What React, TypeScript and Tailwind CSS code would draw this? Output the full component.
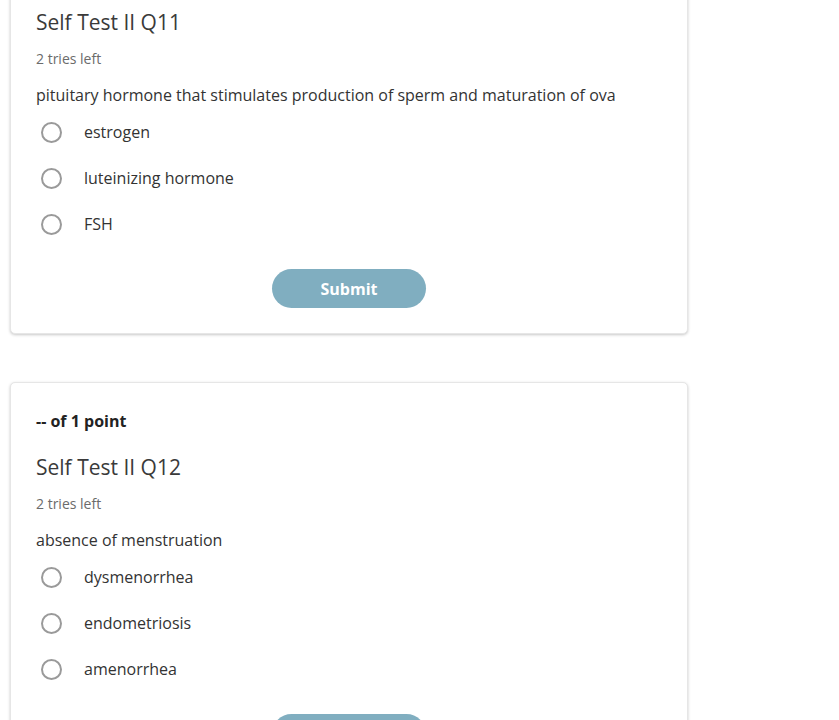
import React from 'react';

type Question = {
  title: string;
  prompt: string;
  options: string[];
};

const questions: Question[] = [
  {
    title: 'Self Test II Q11',
    prompt: 'pituitary hormone that stimulates production of sperm and maturation of ova',
    options: ['estrogen', 'luteinizing hormone', 'FSH'],
  },
  {
    title: 'Self Test II Q12',
    prompt: 'absence of menstruation',
    options: ['dysmenorrhea', 'endometriosis', 'amenorrhea'],
  },
];

function QuestionCard({ q }: { q: Question }) {
  return (
    <div className="w-[678px] rounded-[5px] border border-[#e6e6e6] bg-white px-[25px] pt-[27px] pb-[25px] shadow-[0_1px_3px_rgba(0,0,0,0.22)]">
      <div className="text-[16px] font-bold leading-[22px] text-[#222]">-- of 1 point</div>
      <h2 className="mt-[21px] text-[21px] leading-[28px] text-[#3a3a3a]">{q.title}</h2>
      <div className="mt-[14px] text-[14px] leading-[18px] text-[#6b6b6b]">2 tries left</div>
      <p className="mt-[16px] text-[16px] leading-[22px] text-[#333]">{q.prompt}</p>
      <div className="mt-[3px] flex flex-col">
        {q.options.map((opt) => (
          <label key={opt} className="flex h-[46px] items-center">
            <span className="ml-[5px] h-[21px] w-[21px] rounded-full border-2 border-[#9a9a9a] bg-white" />
            <span className="ml-[22px] text-[16px] leading-[22px] text-[#333]">{opt}</span>
          </label>
        ))}
      </div>
      <div className="mt-[22px] flex justify-center">
        <button
          type="button"
          className="h-[39px] w-[154px] rounded-full bg-[#80aec0] text-[16px] font-bold text-white"
        >
          Submit
        </button>
      </div>
    </div>
  );
}

export default function App() {
  return (
    <div className="min-h-screen overflow-hidden bg-white font-['Open_Sans',sans-serif]">
      <div className="-mt-[63px] ml-[10px] flex flex-col gap-[48px]">
        {questions.map((q) => (
          <QuestionCard key={q.title} q={q} />
        ))}
      </div>
    </div>
  );
}
